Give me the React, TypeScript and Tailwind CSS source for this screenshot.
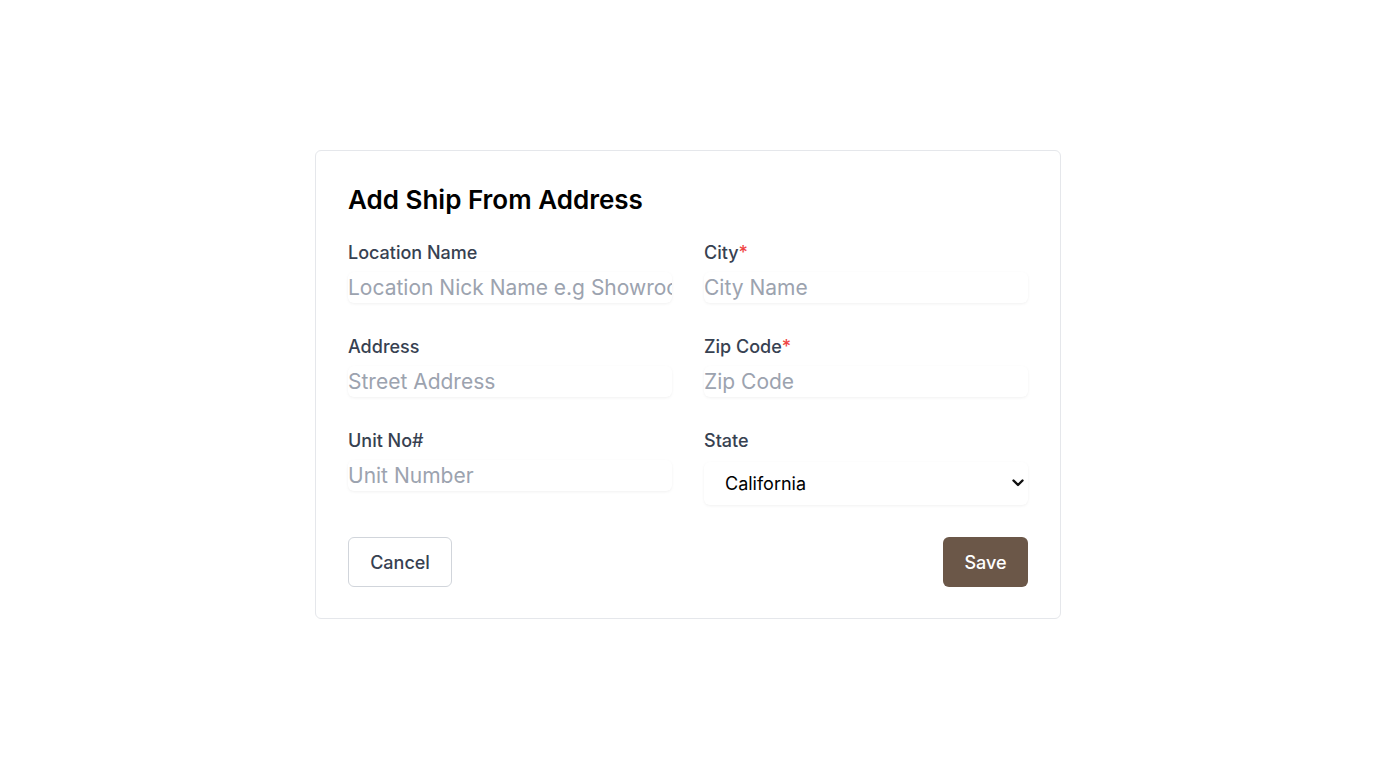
import React from "react";

function Field({ label, required, placeholder }: { label: string; required?: boolean; placeholder: string }) {
  return (
    <div className="flex flex-col">
      <label className="text-[18px] font-medium leading-6 text-[#374151]">
        {label}
        {required && <span className="text-[#ef4444]">*</span>}
      </label>
      <input
        placeholder={placeholder}
        className="mt-[7px] h-[31px] w-full rounded-md bg-white text-[21px] text-[#111827] shadow-[0_1px_3px_rgba(0,0,0,0.06)] outline-none placeholder:text-[#9ca3af]"
      />
    </div>
  );
}

export default function App() {
  return (
    <div className="flex min-h-screen w-full items-start justify-center bg-white pt-[150px]" style={{ fontFamily: "Inter, 'Noto Sans', sans-serif" }}>
      <div className="w-[746px] rounded-md border border-[#e5e7eb] bg-white px-8 pb-[31px] pt-[33px]">
        <h2 className="text-[26px] font-semibold leading-8 text-black">Add Ship From Address</h2>
        <div className="mt-[25px] grid grid-cols-2 gap-x-8 gap-y-[32px]">
          <Field label="Location Name" placeholder="Location Nick Name e.g Showroom" />
          <Field label="City" required placeholder="City Name" />
          <Field label="Address" placeholder="Street Address" />
          <Field label="Zip Code" required placeholder="Zip Code" />
          <Field label="Unit No#" placeholder="Unit Number" />
          <div className="flex flex-col">
            <label className="text-[18px] font-medium leading-6 text-[#374151]">State</label>
            <div className="relative mt-[9px]">
              <select className="h-[43px] w-full appearance-none rounded-md bg-white pl-[21px] pr-8 text-[18px] text-black shadow-[0_1px_3px_rgba(0,0,0,0.06)] outline-none">
                <option>California</option>
              </select>
              <svg className="pointer-events-none absolute right-[4px] top-[17px]" width="12" height="8" viewBox="0 0 12 8" fill="none">
                <path d="M1.5 1.5 L6 6 L10.5 1.5" stroke="#111" strokeWidth="2.4" strokeLinecap="round" strokeLinejoin="round" />
              </svg>
            </div>
          </div>
        </div>
        <div className="mt-8 flex items-center justify-between">
          <button className="h-[50px] w-[104px] rounded-md border border-[#d1d5db] bg-white text-[18px] font-medium text-[#374151]">Cancel</button>
          <button className="h-[50px] w-[85px] rounded-md bg-[#6b5748] text-[18px] font-medium text-white">Save</button>
        </div>
      </div>
    </div>
  );
}
